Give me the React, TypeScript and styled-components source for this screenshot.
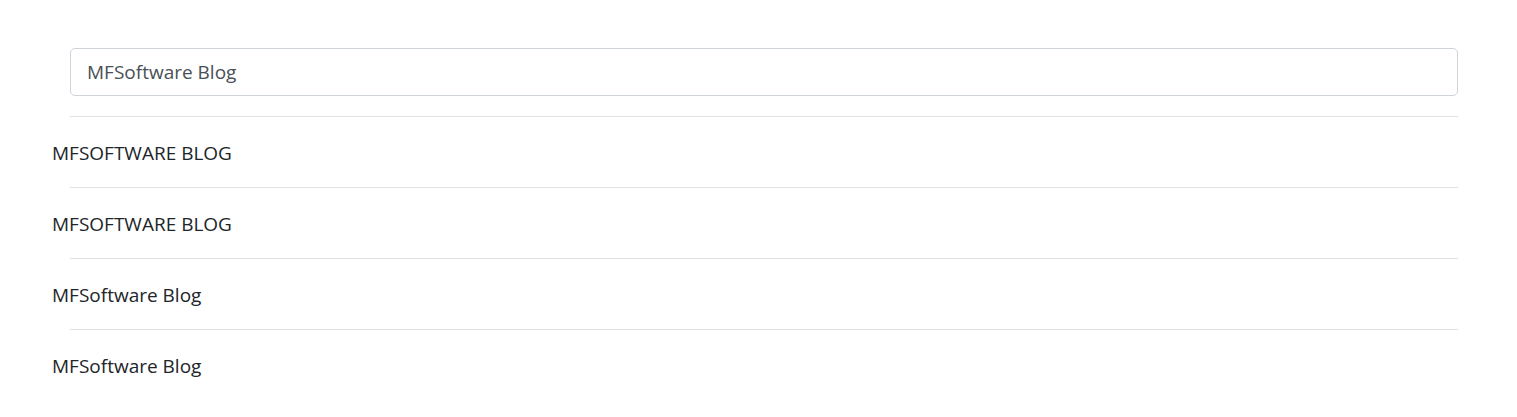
import styled, { createGlobalStyle } from "styled-components";

const GlobalStyle = createGlobalStyle`
  body {
    margin: 0;
    background: #fff;
    font-family: "Open Sans", "Noto Sans", sans-serif;
    color: #212529;
  }
`

const Page = styled.div`
  padding: 48px 59px 0 52px;
`

const SearchInput = styled.input`
  display: block;
  box-sizing: border-box;
  width: calc(100% - 18px);
  margin-left: 18px;
  height: 48px;
  padding: 8px 16px;
  font-family: inherit;
  font-size: 19px;
  color: #495057;
  background: #fff;
  border: 1px solid #ced4da;
  border-radius: 5px;
  outline: none;
`

const Divider = styled.hr`
  margin: 0 0 0 18px;
  border: 0;
  border-top: 1px solid #e2e2e2;
`

const List = styled.div`
  margin-top: 20px;
`

const Title = styled.div`
  padding: 24px 0 22px;
  font-size: 19px;
  line-height: 24px;
`

const titles = ["MFSOFTWARE BLOG", "MFSOFTWARE BLOG", "MFSoftware Blog", "MFSoftware Blog"];

const App = () => {
  return (
    <Page>
      <GlobalStyle />
      <SearchInput defaultValue="MFSoftware Blog" />
      <List>
        {titles.map((t, i) => (
          <div key={i}>
            <Divider />
            <Title>{t}</Title>
          </div>
        ))}
      </List>
    </Page>
  );
}

export default App;
